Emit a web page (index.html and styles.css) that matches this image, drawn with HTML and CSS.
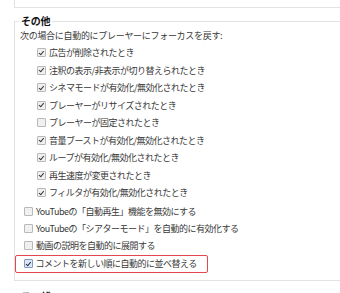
FILE: index.html
```html
<!DOCTYPE html>
<html lang="ja">
<head>
    <meta charset="UTF-8">
    <title>オプション</title>
    <link rel="stylesheet" href="styles.css">
</head>
<body>
    <div class="prev-box"></div>
    <fieldset class="group">
        <legend>その他</legend>
        <p class="intro">次の場合に自動的にプレーヤーにフォーカスを戻す:</p>
        <div class="sub-list">
            <label class="row"><input type="checkbox" checked>広告が削除されたとき</label>
            <label class="row"><input type="checkbox" checked>注釈の表示/非表示が切り替えられたとき</label>
            <label class="row"><input type="checkbox" checked>シネマモードが有効化/無効化されたとき</label>
            <label class="row"><input type="checkbox" checked>プレーヤーがリサイズされたとき</label>
            <label class="row"><input type="checkbox">プレーヤーが固定されたとき</label>
            <label class="row"><input type="checkbox" checked>音量ブーストが有効化/無効化されたとき</label>
            <label class="row"><input type="checkbox" checked>ループが有効化/無効化されたとき</label>
            <label class="row"><input type="checkbox" checked>再生速度が変更されたとき</label>
            <label class="row"><input type="checkbox" checked>フィルタが有効化/無効化されたとき</label>
        </div>
        <div class="main-list">
            <label class="row"><input type="checkbox">YouTubeの「自動再生」機能を無効にする</label>
            <label class="row"><input type="checkbox">YouTubeの「シアターモード」を自動的に有効化する</label>
            <label class="row"><input type="checkbox">動画の説明を自動的に展開する</label>
            <label class="row highlight"><input type="checkbox" checked>コメントを新しい順に自動的に並べ替える</label>
        </div>
    </fieldset>
    <fieldset class="group next">
        <legend>ユーザー</legend>
    </fieldset>
</body>
</html>
```

FILE: styles.css
```css
* {
    box-sizing: border-box;
}

html, body {
    margin: 0;
    padding: 0;
    background: #fff;
    overflow: hidden;
}

body {
    font-family: "Noto Sans CJK JP", "Liberation Sans", sans-serif;
    font-size: 9px;
    letter-spacing: -0.5px;
    color: #383838;
}

.prev-box {
    margin-left: 14px;
    width: 400px;
    height: 8px;
    border-left: 1px solid #e2e2e2;
    border-bottom: 1px solid #e2e2e2;
}

.group {
    margin: 6px 0 0 14px;
    width: 400px;
    padding: 0 5px 7px 9px;
    border: 1px solid #e2e2e2;
}

.group legend {
    padding: 0 2px;
    margin-left: -5px;
    font-weight: bold;
    font-size: 10px;
    line-height: 14px;
    letter-spacing: -0.2px;
    color: #111;
}

.group.next {
    margin-top: 8px;
    height: 40px;
}

.intro {
    margin: 2px 0 2px -4px;
    line-height: 12px;
    letter-spacing: -0.3px;
}

.sub-list {
    padding-left: 13px;
}

.main-list {
    margin-top: 1.5px;
}

.row {
    display: flex;
    align-items: center;
    gap: 3px;
    height: 17.5px;
    white-space: nowrap;
}

.main-list .row {
    height: 17px;
}

.row input {
    appearance: none;
    flex: none;
    margin: 0;
    width: 9px;
    height: 9px;
    border: 1px solid #b8b8b8;
    border-radius: 1px;
    background: #f0f0f0;
    position: relative;
}

.row input:checked::after {
    content: "";
    position: absolute;
    left: 2.2px;
    top: 0.5px;
    width: 2px;
    height: 3.5px;
    border-right: 1.5px solid #333;
    border-bottom: 1.5px solid #333;
    transform: rotate(40deg);
}

.main-list .row.highlight {
    margin: 0.5px 0 0 -9px;
    width: 193px;
    height: 18px;
    padding-left: 7.5px;
    border: 1.5px solid #e4484e;
    border-radius: 2px;
}

.row.highlight input {
    border-color: #7f9bc4;
    background: #dce7f6;
}

.row.highlight input:checked::after {
    border-color: #1f2f4a;
}
```
